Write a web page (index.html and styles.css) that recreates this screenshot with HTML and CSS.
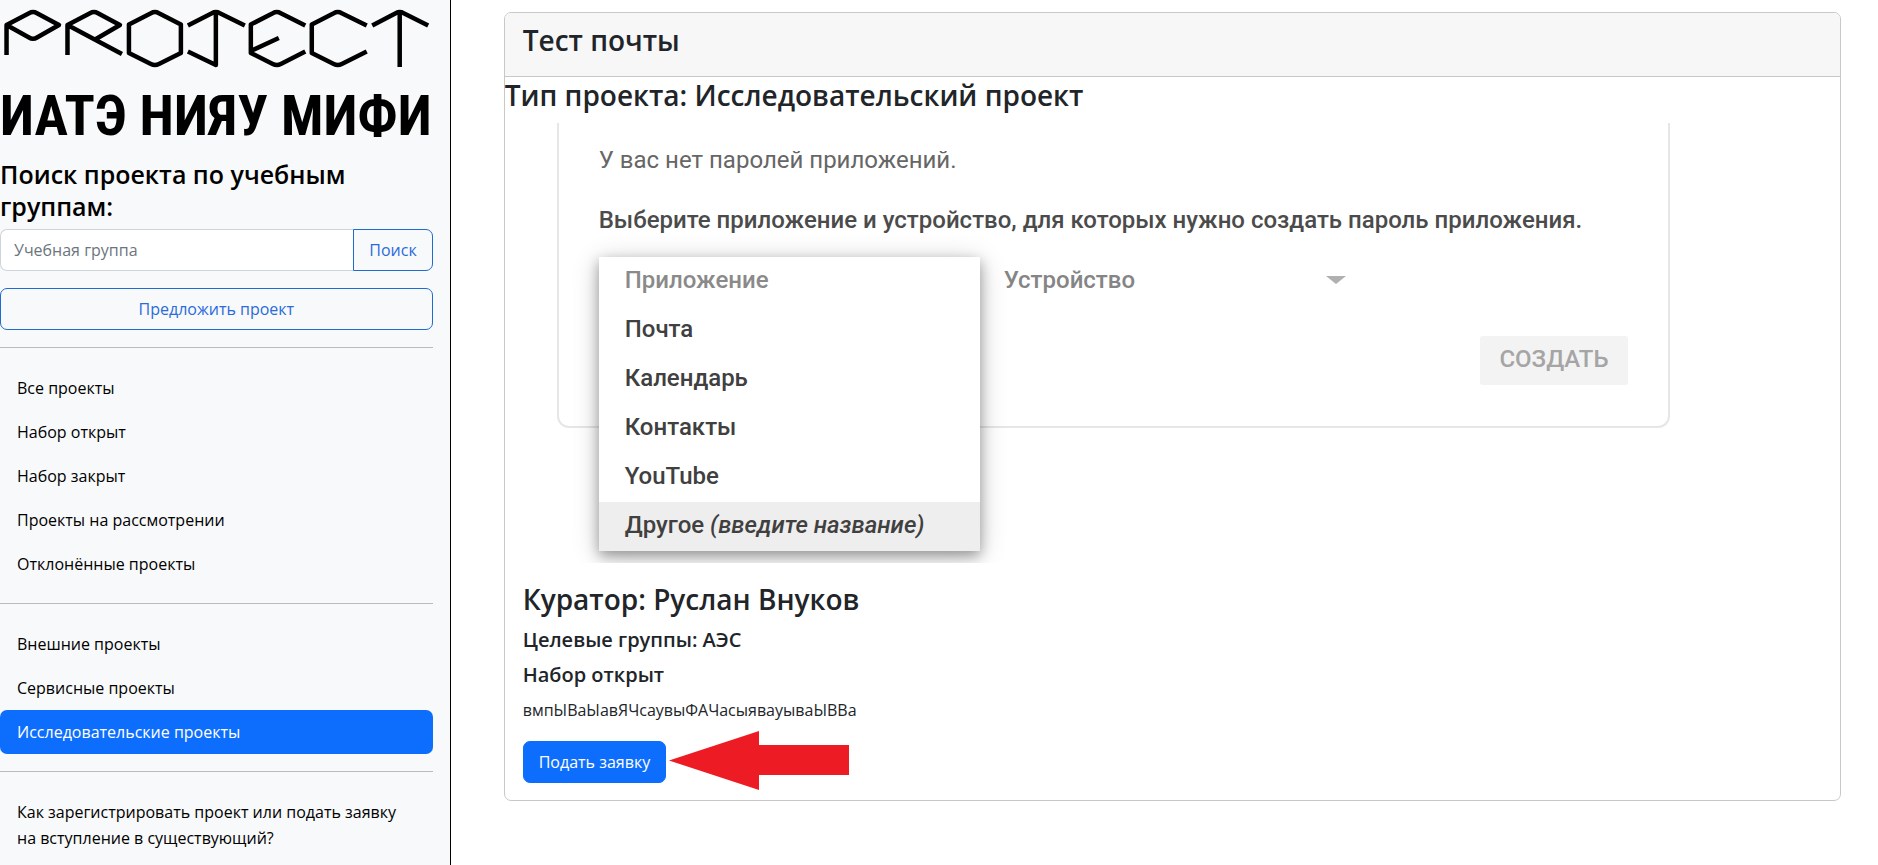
FILE: index.html
```html
<!DOCTYPE html>
<html lang="ru">
<head>
<meta charset="utf-8">
<title>Project ИАТЭ НИЯУ МИФИ</title>
<meta name="viewport" content="width=device-width, initial-scale=1">
<link rel="stylesheet" href="styles.css">
</head>
<body class="page">
<aside class="sidebar">
  <a class="logo" href="#">
    <svg class="logo-mark" viewBox="0 0 433 75" role="img" aria-label="Project">
      <g fill="none" stroke="#000" stroke-width="4.5" stroke-linejoin="round">
        <path d="M6.500 55V25L29 13.200Q33 11 37 13.200L59 25L37 37.500Q33 40 29 37.500L6.500 25"/>
        <path d="M67.500 55V25L90 13.200Q94 11 98 13.200L120 25L96 39M67.500 25L122 54"/>
        <path d="M129 24.500L151 13.200Q155 11 159 13.200L181 24.500V53L159 64Q155 66 151 64L129 53Z"/>
        <path d="M188 25.500L212 13.200Q216 11 220 13.200L245 25.500M216 12V65L188 51.500"/>
        <path d="M305.500 25.500L281 13.200Q277 11 273 13.200L251 24.500V53L273 64Q277 66 281 64L305.500 51.500M251 51L279 38"/>
        <path d="M367 25.500L342 13.200Q338 11 334 13.200L312 24.500V53L334 64Q338 66 342 64L367 51.500"/>
        <path d="M372.500 25.500L396 13.200Q400 11 404 13.200L428.500 25.500M400 12V67"/>
      </g>
    </svg>
    <span class="logo-text">ИАТЭ НИЯУ МИФИ</span>
  </a>
  <form class="search">
    <label class="search-title" for="group">Поиск проекта по учебным группам:</label>
    <div class="search-row">
      <input class="search-input" id="group" type="text" placeholder="Учебная группа">
      <button class="btn btn-outline search-btn" type="button">Поиск</button>
    </div>
  </form>
  <button class="btn btn-outline btn-wide" type="button">Предложить проект</button>
  <hr class="divider">
  <nav class="nav">
    <a class="nav-link" href="#">Все проекты</a>
    <a class="nav-link" href="#">Набор открыт</a>
    <a class="nav-link" href="#">Набор закрыт</a>
    <a class="nav-link" href="#">Проекты на рассмотрении</a>
    <a class="nav-link" href="#">Отклонённые проекты</a>
  </nav>
  <hr class="divider">
  <nav class="nav">
    <a class="nav-link" href="#">Внешние проекты</a>
    <a class="nav-link" href="#">Сервисные проекты</a>
    <a class="nav-link active" href="#">Исследовательские проекты</a>
  </nav>
  <hr class="divider">
  <nav class="nav">
    <a class="nav-link" href="#">Как зарегистрировать проект или подать заявку на вступление в существующий?</a>
  </nav>
</aside>
<main class="main">
  <article class="card">
    <header class="card-header"><h3 class="title">Тест почты</h3></header>
    <h3 class="title">Тип проекта: Исследовательский проект</h3>
    <div class="preview">
      <section class="panel">
        <p class="panel-note">У вас нет паролей приложений.</p>
        <p class="panel-lead">Выберите приложение и устройство, для которых нужно создать пароль приложения.</p>
        <div class="panel-row">
          <div class="app-slot">
            <ul class="menu">
              <li class="menu-item menu-label">Приложение</li>
              <li class="menu-item">Почта</li>
              <li class="menu-item">Календарь</li>
              <li class="menu-item">Контакты</li>
              <li class="menu-item">YouTube</li>
              <li class="menu-item selected">Другое <em>(введите название)</em></li>
            </ul>
          </div>
          <button class="device" type="button">Устройство
            <svg class="caret" viewBox="0 0 20 8" aria-hidden="true"><path d="M0 0H20L10 8Z" fill="#b0b0b0"/></svg>
          </button>
        </div>
        <button class="create" type="button" disabled>СОЗДАТЬ</button>
      </section>
    </div>
    <div class="card-body">
      <h3 class="title">Куратор: Руслан Внуков</h3>
      <h5 class="subtitle">Целевые группы: АЭС</h5>
      <h5 class="subtitle">Набор открыт</h5>
      <p class="description">вмпЫВаЫавЯЧсаувыФАЧасыявауываЫВВа</p>
      <div class="actions">
        <button class="btn btn-primary" type="button">Подать заявку</button>
        <svg class="pointer" viewBox="0 0 180 59" aria-hidden="true"><path d="M0 29.500L90 0V14H180V44H90V59Z" fill="#ed1c24"/></svg>
      </div>
    </div>
  </article>
</main>
</body>
</html>
```
FILE: styles.css
```css
* { box-sizing: border-box; }

.page {
  display: flex;
  min-height: 100vh;
  margin: 0;
  background: #fff;
  color: #212529;
  font-family: "Open Sans", "Noto Sans", sans-serif;
  font-size: 16px;
  line-height: 26px;
}

.sidebar {
  flex: 0 0 24%;
  height: 100vh;
  overflow: hidden;
  padding-right: 17px;
  background: #f8f9fa;
  border-right: 1px solid #000;
  color: #000;
}

.logo { display: block; color: #000; text-decoration: none; }
.logo-mark { display: block; width: 100%; }
.logo-text {
  display: block;
  font-family: "Liberation Sans Narrow", "Roboto Condensed", "Roboto", sans-serif;
  font-size: 56px;
  font-weight: 700;
  line-height: 83px;
  white-space: nowrap;
}

.search-title {
  display: block;
  margin-bottom: 7px;
  font-size: 25px;
  font-weight: 600;
  line-height: 32px;
}
.search-row { display: flex; margin-bottom: 17px; }
.search-input {
  flex: 1;
  min-width: 0;
  padding: 7px 13px;
  border: 1px solid #ced4da;
  border-right: 0;
  border-radius: 7px 0 0 7px;
  background: #fff;
  font: inherit;
}
.search-input::placeholder { color: #6c757d; opacity: 1; }

.btn {
  height: 42px;
  padding: 7px 15px;
  border: 1px solid #0d6efd;
  border-radius: 7px;
  font: inherit;
  white-space: nowrap;
}
.btn-outline { background: transparent; border-color: #216bd0; color: #2a6bdc; }
.search-btn { border-radius: 0 7px 7px 0; }
.btn-wide { display: block; width: 100%; }
.btn-primary { background: #0d6efd; color: #fff; }

.divider { margin: 17px 0 18px; border: 0; border-top: 1px solid #babbbc; }
.nav { display: flex; flex-direction: column; }
.nav-link {
  padding: 9px 17px;
  border-radius: 7px;
  color: #000;
  text-decoration: none;
}
.nav-link.active { background: #0d6efd; color: #fff; }

.main { flex: 1; min-width: 0; padding: 12px 37px 12px 53px; }
.card { border: 1px solid #c8c8c8; border-radius: 7px; }
.card-header {
  padding: 9px 18px 8px;
  border-bottom: 1px solid #c8c8c8;
  border-radius: 6px 6px 0 0;
  background: #f7f7f7;
}
.title { margin: 0 0 9px; font-size: 28px; font-weight: 600; line-height: 37px; }
.card-body { padding: 18px 18px 17px; }
.subtitle { margin: 0 0 9px; font-size: 20px; font-weight: 600; line-height: 26px; }
.description { margin: 0 0 18px; }
.actions { display: flex; align-items: center; gap: 3px; height: 42px; }
.pointer { width: 180px; flex: none; margin-bottom: 3px; }

.preview {
  height: 440px;
  overflow: hidden;
  padding: 0 170px 0 52px;
  color: #4b4b4b;
  font-family: "Roboto", sans-serif;
  font-size: 24px;
}
.panel {
  display: flex;
  flex-direction: column;
  height: 305px;
  padding: 22px 40px 0;
  border: 2px solid #e6e6e6;
  border-top: 0;
  border-radius: 0 0 12px 12px;
}
.panel-note { margin: 0 0 30px; line-height: 30px; color: #666; }
.panel-lead { margin: 0 0 22px; line-height: 30px; font-weight: 500; white-space: nowrap; }
.panel-row { display: flex; gap: 24px; height: 46px; }
.app-slot { position: relative; flex: 0 0 381px; }
.menu {
  position: absolute;
  top: 0;
  left: 0;
  width: 100%;
  margin: 0;
  padding: 0;
  background: #fff;
  box-shadow: 0 5px 12px rgba(0, 0, 0, 0.32), 0 4px 26px rgba(0, 0, 0, 0.2);
  color: #404040;
  font-weight: 500;
  list-style: none;
}
.menu-item { padding: 0 26px 3px; line-height: 46px; white-space: nowrap; }
.menu-label { color: #8a8a8a; }
.selected { background: #eee; }
.device {
  display: flex;
  align-items: center;
  justify-content: space-between;
  width: 342px;
  padding: 0;
  border: 0;
  background: none;
  color: #858585;
  font: inherit;
  font-weight: 500;
}
.caret { width: 20px; }
.create {
  align-self: flex-end;
  width: 148px;
  height: 49px;
  margin-top: 33px;
  padding: 0 0 3px;
  border: 0;
  border-radius: 3px;
  background: #f3f3f3;
  color: #a5a5a5;
  font: inherit;
  font-weight: 500;
}
```
